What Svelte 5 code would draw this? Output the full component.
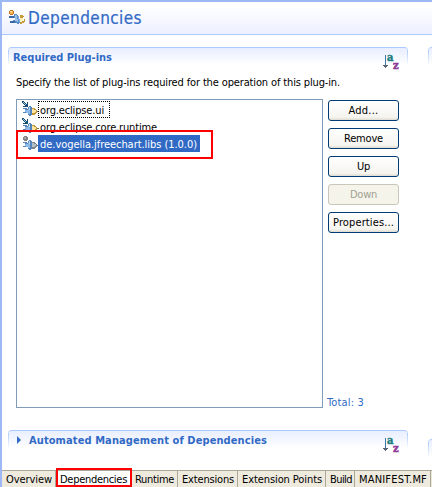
<script>
  const buttons = [
    { label: 'Add...', width: 30 },
    { label: 'Remove', width: 39 },
    { label: 'Up', width: 13 },
    { label: 'Down', width: 27, disabled: true },
    { label: 'Properties...', width: 61 }
  ];
  const plugins = [
    { name: 'org.eclipse.ui', width: 64, arrow: true, focus: true },
    { name: 'org.eclipse.core.runtime', width: 117, arrow: true },
    { name: 'de.vogella.jfreechart.libs (1.0.0)', width: 157, selected: true }
  ];
  const tabs = [
    { label: 'Overview', width: 46, cell: 54 },
    { label: 'Dependencies', width: 67, cell: 75, active: true },
    { label: 'Runtime', width: 39, cell: 47 },
    { label: 'Extensions', width: 52, cell: 60 },
    { label: 'Extension Points', width: 80, cell: 88 },
    { label: 'Build', width: 22, cell: 29 },
    { label: 'MANIFEST.MF', width: 68, cell: 76 }
  ];

  // Spreads the letters so the label takes up the given width.
  function fit(node, width) {
    const natural = node.getBoundingClientRect().width;
    const spacing = (width - natural) / node.textContent.length;
    node.style.letterSpacing = `${spacing}px`;
  }
</script>

{#snippet sortIcon()}
  <svg class="sort" width="18" height="18" viewBox="0 0 18 18">
    <path d="M3.5 2V14" stroke="#3c78a8" />
    <path d="M1 12h5v1h-1v1h-1v1h-1v-1h-1v-1h-1z" fill="#566474" shape-rendering="crispEdges" />
    <text x="5" y="8" font-size="11" fill="#208080" stroke="#208080" stroke-width=".5">a</text>
    <text x="11" y="16" font-size="11" fill="#8b3b94" stroke="#8b3b94" stroke-width=".5">z</text>
  </svg>
{/snippet}

{#snippet plugIcon(arrow)}
  <svg class="plug" width="17" height="17" viewBox="0 0 17 17" shape-rendering="crispEdges">
    <path d="M1 7h4v1h1v-2h1v-1h2v1h1v8h-1v1h-2v-1h-1v-2h-5v-1h2v-3h-2z" fill="#5484bc" />
    <path d="M3 9h3v-1h2v5h-2v-1h-2v-1h-1z" fill="#8db9e6" />
    <path d="M7 6h1v3h-1z" fill="#b8d8f4" />
    {#if arrow}
      <path d="M10 7h3v1h1v1h1v3h-1v1h-1v1h-3z" fill="#c79535" />
      <path d="M10 8h2v1h2v2h-1v1h-3z" fill="#ffe5a0" />
      <path d="M15 10h2v1h-2z" fill="#806c50" />
      <path d="M0 0h2v1h1v1h1v1h1v-2h1v5h-5v-1h2v-1h-1v-1h-1v-1h-1z" fill="#174e76" />
      <path d="M1 1h1v1h1v1h1v1h-1v-1h-1v-1h-1z" fill="#9bc4dc" />
    {:else}
      <path d="M10 7h3v1h1v1h1v3h-1v1h-1v1h-3z" fill="#7b868c" />
      <path d="M10 8h2v1h2v2h-1v1h-3z" fill="#b5bfc4" />
      <path d="M15 10h2v1h-2z" fill="#666" />
      <path d="M2 1h3v1h1v3h-1v1h-3v-1h-1v-3h1z" fill="#858585" />
      <path d="M2 2h2v2h-2z" fill="#a5a5a5" />
    {/if}
  </svg>
{/snippet}

<div class="editor">
  <header>
    <svg width="16" height="16" viewBox="0 0 16 16" shape-rendering="crispEdges">
      <path d="M0 6h6v2h-6zM1 11h5v2h-5z" fill="#3a69a4" />
      <path d="M5 4h3v1h1v2h1v2h1v4h-1v1h-2v-1h-2v-2h-2v-1h2v-2h-1z" fill="#5a8cc6" />
      <path d="M6 5h2v4h1v3h-1v-1h-2z" fill="#9bc1eb" />
      <path d="M9 6h1v3h1v3h-1v-2h-1z" fill="#79a7db" />
      <path d="M11 5h3v1h1v1h-1v1h-3zM11 12h2v-1h2v-2h1v3h-1v1h-2v1h-2z" fill="#c39a35" />
      <path d="M11 8h3v3h-3z" fill="#fff0b3" />
      <path d="M1 0h3v1h1v3h-1v1h-3v-1h-1v-3h1z" fill="#b87329" />
      <path d="M1 1h3v3h-3z" fill="#f5b84b" /><path d="M1 1h2v1h-2z" fill="#ffe2a0" />
    </svg>
    <h1><span use:fit={114}>Dependencies</span></h1>
  </header>

  <main>
    <div class="column">
      <section class="required">
        <div class="bar">
          <h2><span use:fit={99}>Required Plug-ins</span></h2>
          {@render sortIcon()}
        </div>
        <p><span use:fit={324}>Specify the list of plug-ins required for the operation of this plug-in.</span></p>
        <div class="body">
          <ul>
            {#each plugins as p}
              <li>
                {@render plugIcon(p.arrow)}
                <span class="name" class:focus={p.focus} class:selected={p.selected}><span use:fit={p.width}>{p.name}</span></span>
              </li>
            {/each}
            <li class="mark"></li>
          </ul>
          <div class="side">
            {#each buttons as b}
              <button disabled={b.disabled}><span use:fit={b.width}>{b.label}</span></button>
            {/each}
            <div class="total"><span use:fit={37}>Total: 3</span></div>
          </div>
        </div>
      </section>
      <section>
        <div class="bar auto">
          <svg class="twist" width="4" height="8" viewBox="0 0 4 8"><path d="M0 0L4 4L0 8z" fill="#316ac5" /></svg>
          <h2><span use:fit={238}>Automated Management of Dependencies</span></h2>
          {@render sortIcon()}
        </div>
      </section>
    </div>
    <div class="next">
      <div class="bar"></div>
      <div class="bar low"></div>
    </div>
  </main>

  <nav>
    {#each tabs as t}
      <div class="tab" class:active={t.active} style:width="{t.cell}px"><span use:fit={t.width}>{t.label}</span></div>
    {/each}
  </nav>
</div>

<style>
  .editor {
    width: 432px;
    height: 487px;
    box-sizing: border-box;
    border: 0 solid #9db8f5;
    border-width: 2px 0 0 2px;
    background: #fff;
    display: flex;
    flex-direction: column;
    overflow: hidden;
    font: 11px/14px "DejaVu Sans Condensed", "DejaVu Sans", sans-serif;
    font-stretch: condensed;
    color: #000;
  }
  span { white-space: pre; }
  header {
    height: 32px;
    flex: none;
    display: flex;
    border-bottom: 1px solid #abcaff;
    background: linear-gradient(#fff 10%, #edf0ff);
  }
  header svg { margin: 8px 0 0 7px; }
  h1 { font-size: 17px; line-height: 20px; font-weight: 400; color: #316ac5; margin: 6px 0 0 3px; -webkit-text-stroke: .2px #316ac5; }
  main { flex: 1; display: flex; min-height: 0; padding: 12px 0 0 6px; }
  .column { width: 400px; flex: none; }
  .required { height: 383px; }
  .bar {
    height: 18px;
    box-sizing: border-box;
    display: flex;
    position: relative;
    border-top: 1px solid #abcaff;
    border-radius: 4px 4px 0 0;
    background: linear-gradient(#e9eeff, #fff);
    padding-left: 5px;
  }
  .bar::before, .bar::after {
    content: "";
    position: absolute;
    top: 2px;
    width: 1px;
    height: 16px;
    background: linear-gradient(#abcaff, #fff);
  }
  .bar::before { left: 0; }
  .bar::after { right: 0; }
  h2 { font-size: 11px; line-height: 14px; font-weight: 700; margin: 3px 0 0; color: #316ac5; }
  .sort { flex: none; margin: 5px 8px 0 auto; overflow: visible; font-family: "DejaVu Serif", serif; font-weight: 700; }
  .auto { padding-left: 9px; }
  .twist { margin: 5px 8px 0 0; }
  p { margin: 11px 0 0 8px; height: 23px; }
  .body { display: flex; padding-left: 8px; }
  ul {
    width: 307px;
    height: 309px;
    box-sizing: border-box;
    border: 1px solid #7f9db9;
    margin: 0;
    padding: 1px 0 0 5px;
    list-style: none;
    position: relative;
  }
  li { height: 17px; display: flex; }
  .plug { flex: none; margin-right: -1px; }
  .name { height: 17px; box-sizing: border-box; border: 1px solid transparent; padding: 2px 4px 0 1px; line-height: 14px; }
  .focus { border: 1px dotted #000; padding-right: 5px; }
  .selected { background: #316ac5; color: #fff; padding-right: 2px; }
  .mark {
    position: absolute;
    left: -1px;
    top: 30px;
    width: 197px;
    height: 29px;
    box-sizing: border-box;
    border: 2px solid #f00;
  }
  .side { margin-left: 5px; display: flex; flex-direction: column; gap: 7px; padding-top: 1px; height: 308px; box-sizing: border-box; }
  button {
    width: 71px;
    height: 21px;
    flex: none;
    padding: 1px 0 0;
    border: 1px solid #003c74;
    border-radius: 3px;
    background: linear-gradient(#fff, #f5f4ef 85%, #dedbd0);
    font: inherit;
    color: #000;
  }
  button:disabled { border-color: #c9c7ba; background: #f5f4ea; color: #a1a192; }
  .total { margin: auto 0 -3px -1px; color: #316ac5; }
  .next { width: 8px; margin-left: 20px; flex: none; overflow: hidden; }
  .next .bar { width: 30px; }
  .next .low { margin-top: 374px; }
  nav {
    height: 17px;
    box-sizing: border-box;
    flex: none;
    display: flex;
    border-top: 1px solid #aca899;
    background: #ece9d8;
  }
  .tab { flex: none; height: 16px; box-sizing: border-box; padding: 2px 0 0 4px; border-right: 1px solid #aca899; line-height: 14px; background: #eeeade; }
  .active { position: relative; background: #fff; }
  .active::after {
    content: "";
    position: absolute;
    left: 0;
    top: -3px;
    width: 76px;
    height: 19px;
    box-sizing: border-box;
    border: 2px solid #f00;
  }
</style>
